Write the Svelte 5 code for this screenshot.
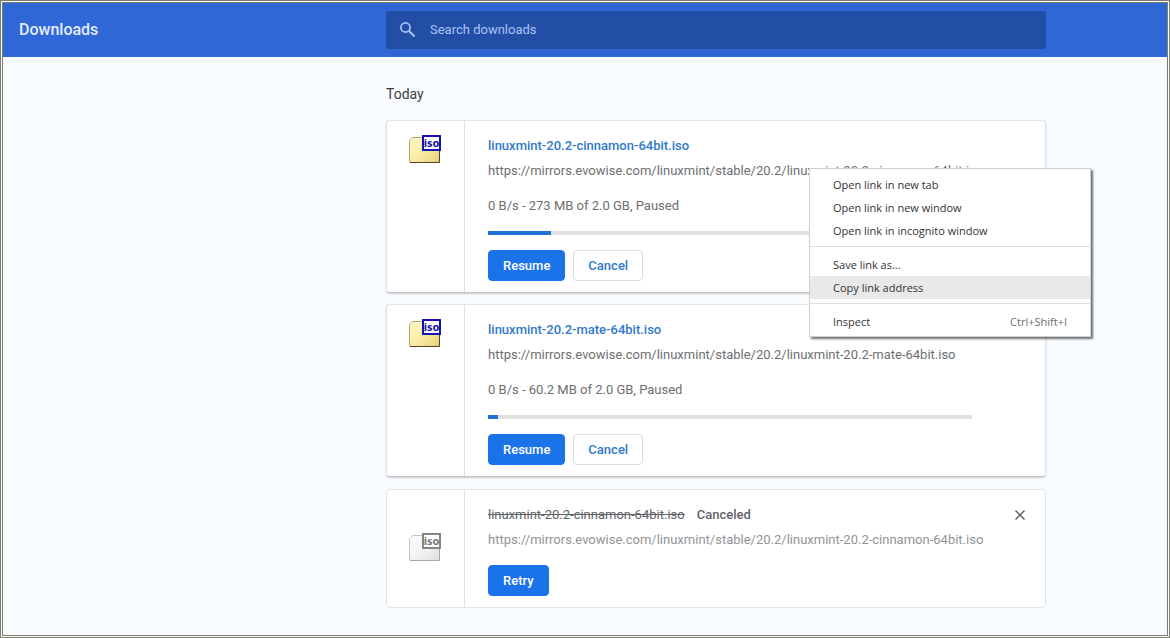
<script>
  const host = 'https://mirrors.evowise.com/linuxmint/stable/20.2/';
  const items = [
    { name: 'linuxmint-20.2-cinnamon-64bit.iso', status: '0 B/s - 273 MB of 2.0 GB, Paused', percent: 13, menu: true },
    { name: 'linuxmint-20.2-mate-64bit.iso', status: '0 B/s - 60.2 MB of 2.0 GB, Paused', percent: 2 },
    { name: 'linuxmint-20.2-cinnamon-64bit.iso', canceled: true },
  ];
  const menu = [
    [{ label: 'Open link in new tab' }, { label: 'Open link in new window' }, { label: 'Open link in incognito window' }],
    [{ label: 'Save link as...' }, { label: 'Copy link address', active: true }],
    [{ label: 'Inspect', keys: 'Ctrl+Shift+I' }],
  ];
</script>

{#snippet isoIcon(gray)}
  <svg class="file-icon" width="34" height="30" viewBox="1 0 34 30" aria-hidden="true">
    <defs>
      <linearGradient id={gray ? 'fold-gray' : 'fold-yellow'} x1="0" y1="0" x2="1" y2="1">
        <stop offset="0" stop-color={gray ? '#fbfbfb' : '#fdf9c4'} />
        <stop offset="0.5" stop-color={gray ? '#f3f3f3' : '#f8eda6'} />
        <stop offset="1" stop-color={gray ? '#dedede' : '#e6cf74'} />
      </linearGradient>
    </defs>
    <path d="M1.5 27V6.500L5 3.500H14.500V6.500H31.500V27Q31.500 28.500 30 28.500H3Q1.500 28.500 1.500 27Z"
      fill="url(#{gray ? 'fold-gray' : 'fold-yellow'})" stroke={gray ? '#c4c4c4' : '#b5a568'} />
    <path d="M2.500 7.500L5.500 4.500H14" fill="none" stroke={gray ? '#fff' : '#fffde0'} />
    <path d="M2 28.500H31.500V16" fill="none" stroke={gray ? '#a8a8a8' : '#4e4726'} />
    <rect x="15" y="2" width="17" height="14" fill="#fff" stroke={gray ? '#858585' : '#1212b8'} stroke-width="2" />
    <text x="23.500" y="13" text-anchor="middle" fill={gray ? '#777' : '#1212a8'}>iso</text>
  </svg>
{/snippet}

<div class="page">
  <header>
    <h1>Downloads</h1>
    <label class="search">
      <svg width="18" height="18" viewBox="0 0 18 18" aria-hidden="true">
        <circle cx="6.500" cy="6.500" r="4.600" fill="none" stroke="#a9c4f5" stroke-width="1.700" />
        <path d="M10 10L15.500 15.500" stroke="#a9c4f5" stroke-width="2" />
      </svg>
      <input type="search" placeholder="Search downloads" aria-label="Search downloads" />
    </label>
  </header>

  <main>
    <section>
      <h2>Today</h2>
      {#each items as item}
        <article class:canceled={item.canceled}>
          <div class="icon-cell">{@render isoIcon(item.canceled)}</div>
          <div class="details">
            <div class="title">
              {#if item.canceled}
                <s>{item.name}</s><span>Canceled</span>
                <button class="remove" aria-label="Remove from list">
                  <svg width="12" height="12" viewBox="0 0 12 12" aria-hidden="true">
                    <path d="M1.500 1.500L10.500 10.500M10.500 1.500L1.500 10.500" stroke="#5f6368" stroke-width="1.500" />
                  </svg>
                </button>
              {:else}
                <a href="#file">{item.name}</a>
              {/if}
            </div>
            <a class="url" href="#source">{host}{item.name}</a>
            {#if item.canceled}
              <div class="actions"><button class="primary">Retry</button></div>
            {:else}
              <p class="status">{item.status}</p>
              <div class="bar" role="progressbar" aria-label={item.name} aria-valuenow={item.percent} aria-valuemin="0" aria-valuemax="100">
                <div class="fill" style="width: {item.percent}%"></div>
              </div>
              <div class="actions">
                <button class="primary">Resume</button>
                <button>Cancel</button>
              </div>
            {/if}
          </div>
          {#if item.menu}
            <div class="menu" role="menu">
              {#each menu as group}
                <div class="group">
                  {#each group as entry}
                    <button role="menuitem" class:active={entry.active}>
                      <span>{entry.label}</span>
                      {#if entry.keys}<kbd>{entry.keys}</kbd>{/if}
                    </button>
                  {/each}
                </div>
              {/each}
            </div>
          {/if}
        </article>
      {/each}
    </section>
  </main>
</div>

<style>
  :global(body) { margin: 0; background: #f9fcfd; }
  .page {
    box-sizing: border-box;
    min-height: 100vh;
    border: 3px double #7d7f6c;
    background: #f9fcfe;
    color: #5f6368;
    font: 13px/20px Roboto, sans-serif;
  }
  header, main {
    display: grid;
    grid-template-columns: minmax(0, 383fr) minmax(0, 660px) minmax(0, 121fr);
  }
  header {
    align-items: center;
    height: 54px;
    background: #3067d6;
  }
  h1 { margin: 0; padding-left: 16px; font-size: 16px; font-weight: 500; color: #e3edff; }
  .search {
    display: flex;
    align-items: center;
    gap: 13px;
    height: 38px;
    padding: 0 13px;
    border-radius: 2px;
    background: #234ea6;
  }
  input {
    flex: 1;
    min-width: 0;
    padding: 0;
    border: 0;
    outline: 0;
    background: none;
    font: inherit;
    color: #fff;
  }
  input::placeholder { color: #a9c4f5; opacity: 1; }
  section { grid-column: 2; padding: 27px 0; }
  h2 { margin: 0 0 16px; font-size: 14px; line-height: 20px; font-weight: 400; color: #3c4043; }
  article {
    position: relative;
    display: flex;
    box-sizing: border-box;
    margin-bottom: 11px;
    border: 1px solid #e2e5e8;
    border-bottom-color: #c3c8cc;
    border-radius: 4px;
    background: #fff;
    box-shadow: 0 1px 2px #3c404340;
  }
  article.canceled { margin: 12px 0 0; border-color: #e0e3e6; box-shadow: none; }
  .icon-cell {
    flex: none;
    display: flex;
    justify-content: center;
    width: 77px;
    padding-top: 13px;
    border-right: 1px solid #e0e0e0;
  }
  .canceled .icon-cell { align-items: center; padding: 0 0 4px; }
  .file-icon text { font: bold 11px "Noto Sans", sans-serif; }
  .details { flex: 1; min-width: 0; padding: 15px 23px 11px; }
  .title { display: flex; gap: 12px; font-weight: 500; }
  a { color: #3079ca; text-decoration: none; }
  s { font-weight: 400; }
  .remove {
    display: flex;
    align-items: center;
    justify-content: center;
    width: 20px;
    height: 20px;
    margin: 0 -8px 0 auto;
    padding: 0;
    border: 0;
    background: none;
  }
  .url { display: block; margin-top: 5px; color: #6c6f72; }
  .canceled .url { color: #929497; }
  .status { margin: 15px 0; color: #6c6f72; }
  .bar { height: 4px; margin-right: 50px; background: #dfe0e1; }
  .fill { height: 100%; background: #1f72d8; }
  .actions { display: flex; gap: 8px; margin-top: 15px; }
  .actions button {
    box-sizing: border-box;
    height: 31px;
    padding: 0 14px;
    border: 1px solid #dadce0;
    border-radius: 4px;
    background: #fff;
    font: 500 13px/20px Roboto, sans-serif;
    color: #3079ca;
  }
  .actions .primary { border-color: #1a73e8; background: #1a73e8; color: #fff; }
  .menu {
    position: absolute;
    z-index: 1;
    top: 47px;
    left: 422px;
    box-sizing: border-box;
    width: 282px;
    padding: 4px 0 3px;
    border: 1px solid #d0d0d0;
    background: #fff;
    box-shadow: 2px 2px 2px #00000090;
  }
  .group + .group { margin-top: 4px; padding-top: 6px; border-top: 1px solid #dedede; }
  .menu button {
    display: flex;
    align-items: center;
    justify-content: space-between;
    width: 100%;
    height: 23px;
    padding: 0 23px;
    border: 0;
    background: none;
    font: 11px/16px "Open Sans", sans-serif;
    color: #333;
    text-align: left;
  }
  .menu .active { background: #e9e9e9; }
  kbd { font: inherit; color: #6d6d6d; }
</style>
